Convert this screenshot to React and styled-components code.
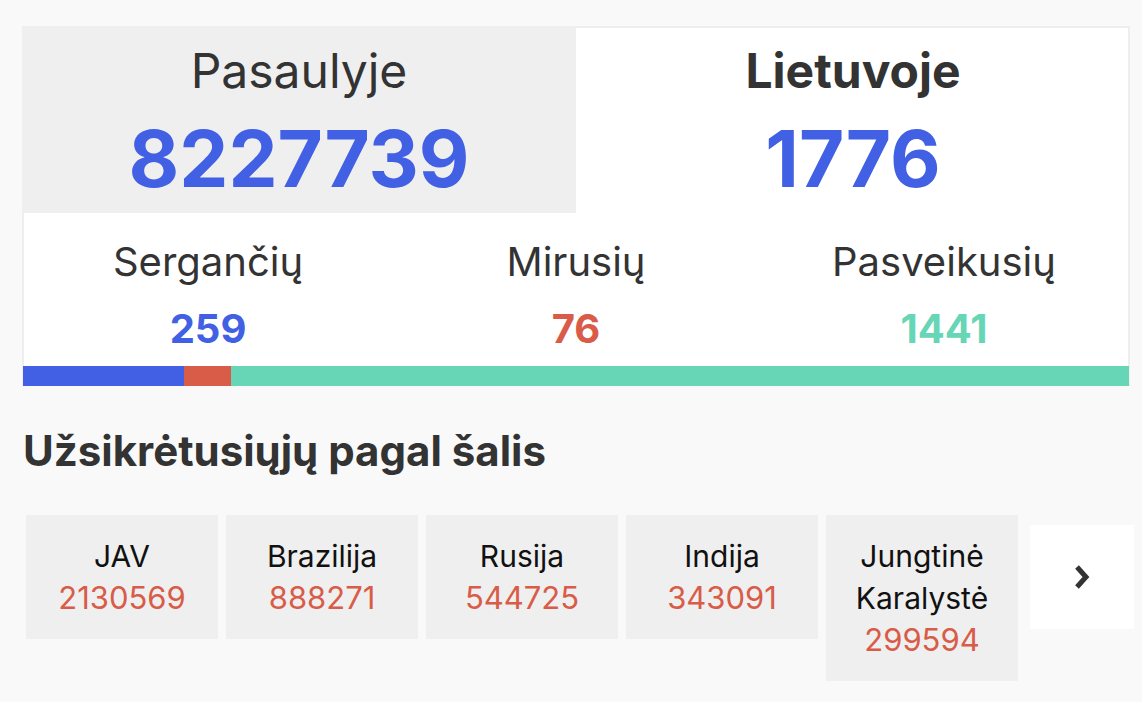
import React from "react";
import styled, { createGlobalStyle } from "styled-components";

const Global = createGlobalStyle`
  html, body { margin: 0; padding: 0; background: #f9f9f9; }
  body { font-family: Inter, "Noto Sans", sans-serif; color: #333; }
  * { box-sizing: border-box; }
`;

const COLORS = { blue: "#4160e4", red: "#d85c48", teal: "#67d6b6" };

const Page = styled.div`
  padding: 26px 0 0 22px;
  width: 1142px;
  height: 702px;
  overflow: hidden;
`;

const Card = styled.section`
  width: 1108px;
  background: #fff;
  border: 2px solid #eeeeee;
  border-bottom: none;
`;

const Header = styled.div`
  display: grid;
  grid-template-columns: 1fr 1fr;
  margin: -2px -2px 0 -2px;
`;

const HeaderCell = styled.div`
  background: ${(p) => (p.$active ? "#efefef" : "transparent")};
  text-align: center;
  padding: 16px 0 9px;
  height: 187px;
`;

const HeaderLabel = styled.div`
  font-size: 48px;
  line-height: 58px;
  font-weight: ${(p) => (p.$bold ? 700 : 400)};
  color: #333;
`;

const HeaderNumber = styled.div`
  font-size: 78px;
  line-height: 90px;
  font-weight: 700;
  color: ${COLORS.blue};
  margin-top: 14px;
`;

const Stats = styled.div`
  display: grid;
  grid-template-columns: repeat(3, 1fr);
  padding: 24px 0 13px;
`;

const Stat = styled.div`
  text-align: center;
`;

const StatLabel = styled.div`
  font-size: 40px;
  line-height: 50px;
  color: #333;
`;

const StatNumber = styled.div`
  font-size: 40px;
  line-height: 48px;
  font-weight: 700;
  margin-top: 18px;
  color: ${(p) => p.$color};
`;

const Bar = styled.div`
  display: flex;
  height: 20px;
  margin: 0 -1px 0 -1px;
`;

const Segment = styled.div`
  height: 100%;
  background: ${(p) => p.$color};
  flex: ${(p) => (p.$grow ? "1 1 auto" : "0 0 auto")};
`;

const Title = styled.h2`
  margin: 41px 0 0 1px;
  font-size: 42px;
  line-height: 48px;
  font-weight: 700;
  color: #333;
`;

const Countries = styled.div`
  display: flex;
  align-items: flex-start;
  margin-top: 40px;
`;

const Country = styled.div`
  width: 192px;
  margin: 0 4px;
  flex: 0 0 192px;
  background: #efefef;
  padding: 20px 6px;
  text-align: center;
`;

const CountryName = styled.div`
  font-size: 30px;
  line-height: 42px;
  color: #111;
`;

const CountryCount = styled.div`
  font-size: 31px;
  line-height: 42px;
  color: ${COLORS.red};
`;

const NextButton = styled.button`
  flex: 0 0 104px;
  width: 104px;
  height: 104px;
  margin: 10px 0 0 8px;
  border: none;
  background: #fff;
  display: flex;
  align-items: center;
  justify-content: center;
  padding: 0;
  cursor: pointer;
`;

const total = 1776;
const stats = [
  { label: "Sergančių", value: 259, color: COLORS.blue },
  { label: "Mirusių", value: 76, color: COLORS.red },
  { label: "Pasveikusių", value: 1441, color: COLORS.teal },
];

const countries = [
  { name: "JAV", count: 2130569 },
  { name: "Brazilija", count: 888271 },
  { name: "Rusija", count: 544725 },
  { name: "Indija", count: 343091 },
  { name: "Jungtinė Karalystė", count: 299594 },
];

export default function App() {
  const barWidth = 1106;
  return (
    <Page>
      <Global />
      <Card>
        <Header>
          <HeaderCell $active>
            <HeaderLabel>Pasaulyje</HeaderLabel>
            <HeaderNumber>8227739</HeaderNumber>
          </HeaderCell>
          <HeaderCell>
            <HeaderLabel $bold>Lietuvoje</HeaderLabel>
            <HeaderNumber>{total}</HeaderNumber>
          </HeaderCell>
        </Header>
        <Stats>
          {stats.map((s) => (
            <Stat key={s.label}>
              <StatLabel>{s.label}</StatLabel>
              <StatNumber $color={s.color}>{s.value}</StatNumber>
            </Stat>
          ))}
        </Stats>
        <Bar>
          {stats.map((s, i) => (
            <Segment
              key={s.label}
              $color={s.color}
              $grow={i === stats.length - 1}
              style={i < stats.length - 1 ? { width: Math.round((s.value / total) * barWidth) } : undefined}
            />
          ))}
        </Bar>
      </Card>
      <Title>Užsikrėtusiųjų pagal šalis</Title>
      <Countries>
        {countries.map((c) => (
          <Country key={c.name}>
            <CountryName>{c.name}</CountryName>
            <CountryCount>{c.count}</CountryCount>
          </Country>
        ))}
        <NextButton aria-label="Toliau">
          <svg width="18" height="26" viewBox="0 0 18 26">
            <polyline points="4,3 13,13 4,23" fill="none" stroke="#333" strokeWidth="5" strokeLinejoin="miter" strokeLinecap="butt" />
          </svg>
        </NextButton>
      </Countries>
    </Page>
  );
}
